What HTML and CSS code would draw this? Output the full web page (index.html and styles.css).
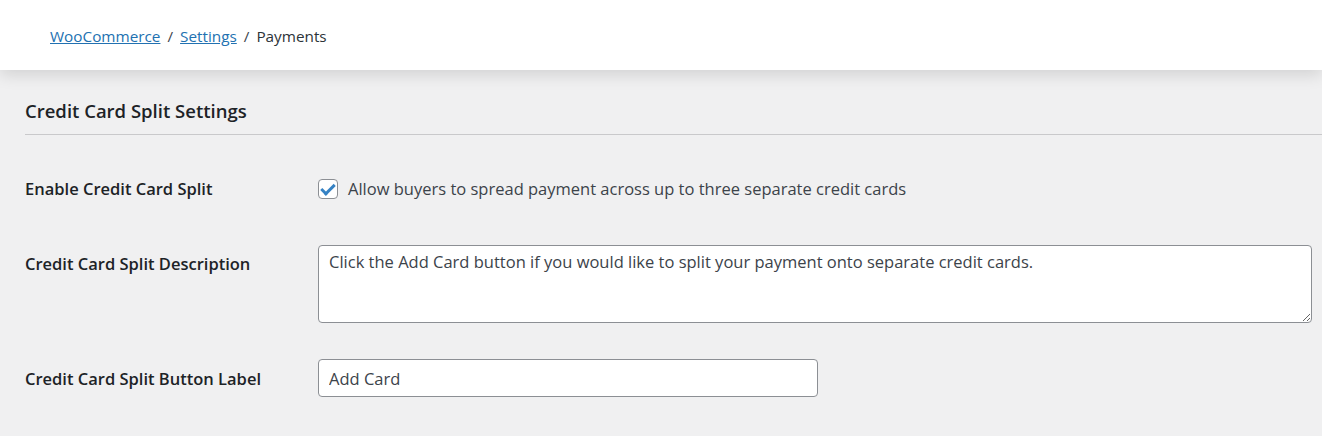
FILE: index.html
```html
<!DOCTYPE html>
<html lang="en">
<head>
    <meta charset="UTF-8">
    <title>Payments ‹ WooCommerce Settings</title>
    <link rel="stylesheet" href="styles.css">
</head>
<body>
    <header class="top-bar">
        <nav class="breadcrumbs">
            <a href="#">WooCommerce</a>
            <span class="sep">/</span>
            <a href="#">Settings</a>
            <span class="sep">/</span>
            <span class="current">Payments</span>
        </nav>
    </header>

    <main class="settings">
        <h2 class="section-title">Credit Card Split Settings</h2>

        <div class="form-table">
            <div class="row row-check">
                <label class="field-label" for="ccsEnable">Enable Credit Card Split</label>
                <label class="check-label">
                    <input type="checkbox" id="ccsEnable" class="checkbox" checked>
                    <span>Allow buyers to spread payment across up to three separate credit cards</span>
                </label>
            </div>

            <div class="row row-textarea">
                <label class="field-label" for="ccsDesc">Credit Card Split Description</label>
                <textarea id="ccsDesc" class="textarea">Click the Add Card button if you would like to split your payment onto separate credit cards.</textarea>
            </div>

            <div class="row row-input">
                <label class="field-label" for="ccsLabel">Credit Card Split Button Label</label>
                <input type="text" id="ccsLabel" class="text-input" value="Add Card">
            </div>
        </div>
    </main>
</body>
</html>
```

FILE: styles.css
```css
* {
    margin: 0;
    padding: 0;
    box-sizing: border-box;
}

body {
    font-family: "Open Sans", "Noto Sans", sans-serif;
    background: #f0f0f1;
    color: #3c434a;
    font-size: 16.5px;
    overflow: hidden;
}

.top-bar {
    background: #fff;
    height: 70px;
    display: flex;
    align-items: center;
    padding: 0 50px;
    box-shadow: 0 4px 16px rgba(0, 0, 0, 0.14);
    position: relative;
}

.breadcrumbs {
    font-size: 15.3px;
    color: #3c434a;
    display: flex;
    gap: 7px;
    padding-top: 2px;
}

.breadcrumbs a {
    color: #2271b1;
    text-decoration: underline;
}

.breadcrumbs .current {
    color: #2c3338;
}

.settings {
    padding-left: 25px;
}

.section-title {
    font-size: 18.5px;
    font-weight: 600;
    color: #1d2327;
    line-height: 24px;
    padding: 29px 0 11px;
    border-bottom: 1px solid #c9c9cb;
}

.form-table {
    display: flex;
    flex-direction: column;
}

.row {
    display: grid;
    grid-template-columns: 293px 994px;
    align-items: center;
}

.field-label {
    font-size: 16.5px;
    font-weight: 600;
    color: #1d2327;
}

.row-check {
    padding-top: 43px;
    line-height: 22px;
}

.check-label {
    display: flex;
    align-items: center;
    gap: 10px;
    color: #3c434a;
}

.checkbox {
    appearance: none;
    width: 20px;
    height: 20px;
    border: 1px solid #8c8f94;
    border-radius: 4px;
    background: #fff;
    display: grid;
    place-items: center;
}

.checkbox:checked::before {
    content: "";
    width: 5px;
    height: 11px;
    border: solid #3582c4;
    border-width: 0 3px 3px 0;
    transform: translate(0, -1px) rotate(45deg);
}

.row-textarea {
    padding-top: 45px;
    align-items: start;
}

.row-textarea .field-label {
    padding-top: 7px;
}

.textarea {
    font: inherit;
    color: #3c434a;
    height: 78px;
    padding: 4px 10px;
    border: 1px solid #8c8f94;
    border-radius: 4px;
    background: #fff;
    resize: both;
}

.row-input {
    padding-top: 36px;
}

.text-input {
    font: inherit;
    color: #3c434a;
    width: 500px;
    height: 38px;
    padding: 0 10px;
    border: 1px solid #8c8f94;
    border-radius: 4px;
    background: #fff;
}
```
